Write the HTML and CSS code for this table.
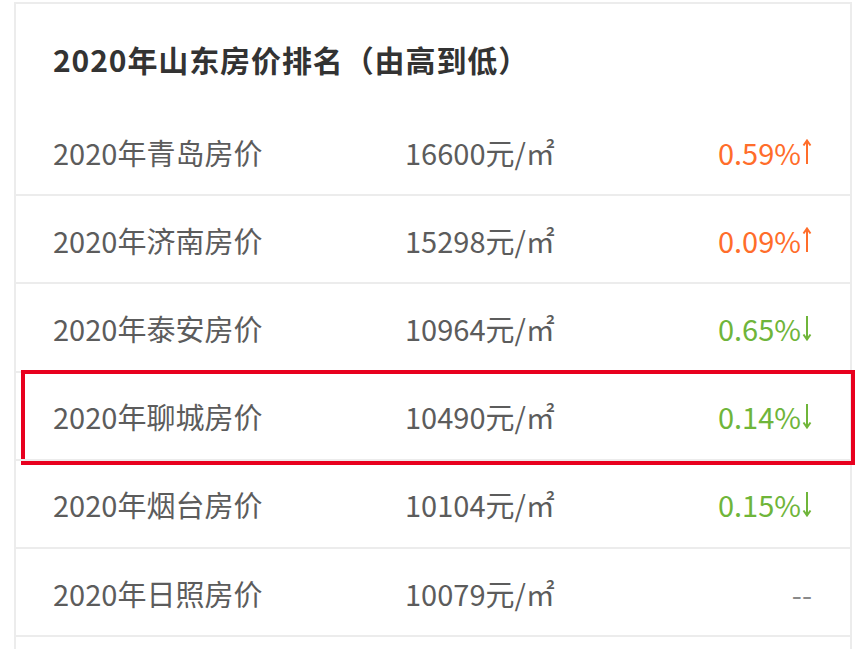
FILE: index.html
```html
<!DOCTYPE html>
<html lang="zh-CN">
<head>
    <meta charset="UTF-8">
    <meta name="viewport" content="width=device-width, initial-scale=1.0">
    <title>2020年山东房价排名</title>
    <link rel="stylesheet" href="styles.css">
</head>
<body>

<div class="panel">
    <h2 class="panel-title">2020年山东房价排名（由高到低）</h2>

    <ul class="rank-list">
        <li class="rank-row">
            <span class="city">2020年青岛房价</span>
            <span class="price">16600元/㎡</span>
            <span class="change up">0.59%<svg class="arrow" viewBox="0 0 10 26"><path d="M5 25V2M1.5 6.5L5 1.5L8.5 6.5"/></svg></span>
        </li>
        <li class="rank-row">
            <span class="city">2020年济南房价</span>
            <span class="price">15298元/㎡</span>
            <span class="change up">0.09%<svg class="arrow" viewBox="0 0 10 26"><path d="M5 25V2M1.5 6.5L5 1.5L8.5 6.5"/></svg></span>
        </li>
        <li class="rank-row">
            <span class="city">2020年泰安房价</span>
            <span class="price">10964元/㎡</span>
            <span class="change down">0.65%<svg class="arrow" viewBox="0 0 10 26"><path d="M5 1V24M1.5 19.5L5 24.5L8.5 19.5"/></svg></span>
        </li>
        <li class="rank-row marked">
            <span class="city">2020年聊城房价</span>
            <span class="price">10490元/㎡</span>
            <span class="change down">0.14%<svg class="arrow" viewBox="0 0 10 26"><path d="M5 1V24M1.5 19.5L5 24.5L8.5 19.5"/></svg></span>
        </li>
        <li class="rank-row">
            <span class="city">2020年烟台房价</span>
            <span class="price">10104元/㎡</span>
            <span class="change down">0.15%<svg class="arrow" viewBox="0 0 10 26"><path d="M5 1V24M1.5 19.5L5 24.5L8.5 19.5"/></svg></span>
        </li>
        <li class="rank-row">
            <span class="city">2020年日照房价</span>
            <span class="price">10079元/㎡</span>
            <span class="change">--</span>
        </li>
    </ul>
</div>

</body>
</html>
```

FILE: styles.css
```css
body {
    margin: 0;
    font-family: "Noto Sans CJK SC", "Noto Sans", sans-serif;
    background: #fff;
}
.panel {
    width: 834px;
    margin: 2px 0 0 14px;
    padding-bottom: 40px;
    border: 2px solid #ececec;
    border-bottom: none;
}
.panel-title {
    margin: 0;
    padding: 35px 0 27px 37px;
    font-size: 30px;
    line-height: 40px;
    font-weight: bold;
    letter-spacing: 0.9px;
    color: #333;
}
.rank-list {
    list-style: none;
    margin: 0;
    padding: 0;
}
.rank-row {
    position: relative;
    display: grid;
    grid-template-columns: 352px 1fr auto;
    align-items: center;
    height: 85.2px;
    padding: 1px 38px 0 37px;
    box-sizing: content-box;
    border-top: 2px solid #ececec;
    font-size: 29px;
    color: #5c5c5c;
}
.rank-row:first-child {
    border-top-color: transparent;
}
.rank-row:last-child {
    border-bottom: 2px solid #ececec;
}
.change {
    display: flex;
    align-items: center;
    justify-content: flex-end;
    color: #8a8a8a;
}
.change.up {
    color: #ff6d2a;
}
.change.down {
    color: #6fb53a;
}
.arrow {
    width: 10px;
    height: 26px;
    margin-left: 1px;
    fill: none;
    stroke: currentColor;
    stroke-width: 2;
}
.marked::after {
    content: "";
    position: absolute;
    left: 5px;
    right: -5px;
    top: -3px;
    bottom: -6px;
    border: 4px solid #e8001e;
}
```
